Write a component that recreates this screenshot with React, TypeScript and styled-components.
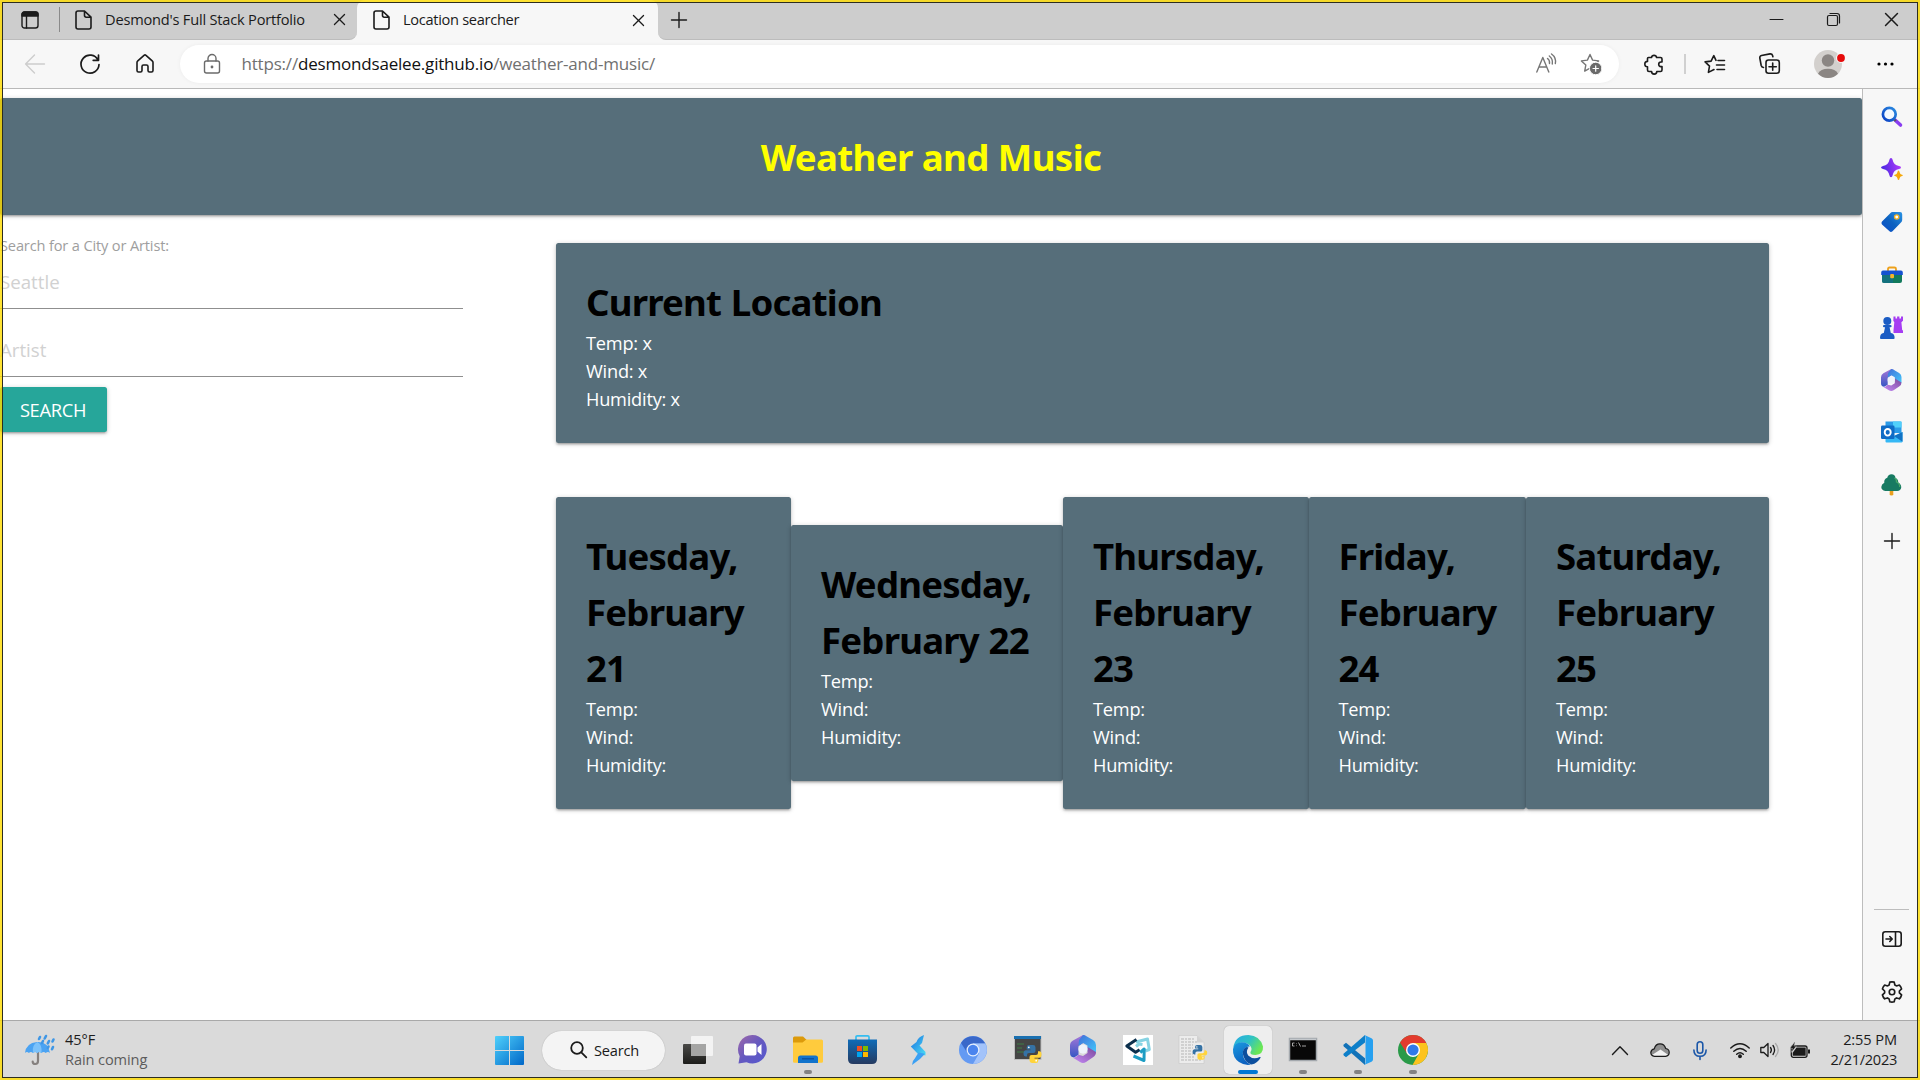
import React from "react";
import styled, { createGlobalStyle, css } from "styled-components";

const slate = "#566e7a";
const ui = `"Open Sans", "Noto Sans", sans-serif`;

const GlobalStyle = createGlobalStyle`
  * { box-sizing: border-box; }
  body { margin: 0; overflow: hidden; background: #fff; font-family: ${ui}; }
  h1, h2, p { margin: 0; }
`;

const Screen = styled.div`
  position: relative;
  display: flex;
  flex-direction: column;
  width: 1920px;
  height: 1080px;
  overflow: hidden;
  background: #fff;
`;

const CaptureFrame = styled.div`
  position: absolute;
  inset: 0;
  border: 2px solid rgba(255, 220, 0, 0.8);
  pointer-events: none;
  &::after {
    content: "";
    position: absolute;
    inset: 0;
    border: 1px solid #2d2d20;
  }
`;

const Glyph = styled.svg<{ $w?: number; $h?: number }>`
  display: block;
  flex: none;
  width: ${(p) => p.$w ?? 22}px;
  height: ${(p) => p.$h ?? p.$w ?? 22}px;
  overflow: visible;
`;

const lineArt = {
  fill: "none",
  stroke: "#1b1b1b",
  strokeWidth: 1.4,
  strokeLinecap: "round",
  strokeLinejoin: "round",
} as const;

/* ---------- Title bar ---------- */

const TitleBar = styled.header`
  display: flex;
  height: 40px;
  background: #f7f7f7;
`;

const InactiveTabs = styled.div`
  display: flex;
  align-items: center;
  width: 357px;
  background: #cdcdcd;
  border-bottom: 1px solid #bcbcbc;
  border-radius: 0 0 8px 0;
`;

const TabActions = styled.div`
  display: flex;
  align-items: center;
  justify-content: flex-end;
  gap: 20px;
  width: 60px;
`;

const TabRule = styled.span`
  width: 1px;
  height: 25px;
  background: #8a8a8a;
`;

const TabBody = styled.div<{ $tight?: number }>`
  display: flex;
  align-items: center;
  flex: 1;
  padding: 0 18px 0 15px;
  font-size: 14.6px;
  line-height: 20px;
  letter-spacing: ${(p) => p.$tight ?? -0.2}px;
  color: #1a1a1a;
`;

const TabTitle = styled.span`
  flex: 1;
  padding: 0 0 2px 13px;
  white-space: nowrap;
`;

const ActiveTabWell = styled.div`
  display: flex;
  width: 301px;
  background: linear-gradient(#cdcdcd 50%, #f7f7f7 50%);
`;

const ActiveTab = styled.div`
  display: flex;
  flex: 1;
  padding: 0 2px 0 1px;
  background: #f7f7f7;
  border-radius: 8px 8px 0 0;
`;

const TitleRest = styled.div`
  display: flex;
  align-items: center;
  flex: 1;
  background: #cdcdcd;
  border-bottom: 1px solid #bcbcbc;
  border-radius: 0 0 0 8px;
`;

const Slot = styled.div<{ $w: number; $h?: number }>`
  display: flex;
  align-items: center;
  justify-content: center;
  flex: none;
  width: ${(p) => p.$w}px;
  ${(p) => p.$h && css`height: ${p.$h}px;`}
`;

const WindowButtons = styled.div`
  display: flex;
  margin-left: auto;
`;

/* ---------- Toolbar ---------- */

const Toolbar = styled.nav`
  display: flex;
  align-items: center;
  height: 49px;
  padding: 0 0 1px 7px;
  background: #f7f7f7;
  border-bottom: 1px solid #b9b9b9;
`;

const AddressPill = styled.div`
  display: flex;
  align-items: center;
  width: 1439px;
  height: 38px;
  margin: 0 7px 0 8px;
  padding: 0 6px 0 21px;
  border-radius: 19px;
  background: #fff;
  box-shadow: 0 0 4px rgba(0, 0, 0, 0.05);
`;

const Address = styled.span`
  flex: 1;
  padding-left: 18.5px;
  font-size: 17px;
  letter-spacing: -0.19px;
  color: #707070;
  b { font-weight: 400; color: #111; }
`;

const ToolRule = styled.span`
  width: 2px;
  height: 20px;
  background: #d0d0d0;
`;

/* ---------- Page and sidebar ---------- */

const Viewport = styled.div`
  display: flex;
  height: 931px;
`;

const Page = styled.main`
  width: 1862px;
  padding-top: 9px;
  background: #fff;
`;

const raised = css`
  background: ${slate};
  border-radius: 2.5px;
  box-shadow: 0 2px 2px 0 rgba(0, 0, 0, 0.14), 0 3px 1px -2px rgba(0, 0, 0, 0.12),
    0 1px 5px 0 rgba(0, 0, 0, 0.2);
`;

const Banner = styled.section`
  ${raised}
  display: flex;
  align-items: center;
  justify-content: center;
  height: 117px;
  padding-top: 1px;
`;

const BannerTitle = styled.h1`
  font: 700 36.6px/56px "Noto Sans", ${ui};
  letter-spacing: -0.58px;
  color: #ff0;
`;

const Columns = styled.div`
  display: grid;
  grid-template-columns: 463px 1213px;
  column-gap: 93px;
`;

const SearchForm = styled.form`
  display: flex;
  flex-direction: column;
  align-items: flex-start;
  padding-top: 21px;
`;

const FieldLabel = styled.label`
  font-size: 14.6px;
  line-height: 19px;
  letter-spacing: -0.15px;
  color: #9e9e9e;
`;

const Field = styled.input`
  width: 100%;
  height: 54px;
  padding: 0 0 1px;
  border: 0;
  border-bottom: 1px solid #8f8f8f;
  background: transparent;
  outline: 0;
  font: 18.7px ${ui};
  &::placeholder { color: #d1d1d1; opacity: 1; }
  & + & { margin-top: 14px; }
`;

const SearchButton = styled.button`
  ${raised}
  width: 107px;
  height: 45px;
  margin-top: 10px;
  padding: 0 1px 0 0;
  border: 0;
  background: #26a69a;
  color: #fff;
  font: 18.3px ${ui};
  letter-spacing: -0.3px;
`;

const Results = styled.section`
  display: flex;
  flex-direction: column;
  gap: 54px;
  padding-top: 28px;
`;

const Card = styled.article<{ $w?: number }>`
  ${raised}
  width: ${(p) => (p.$w ? `${p.$w}px` : "auto")};
  padding: 30px 30px 29.400px;
`;

const CardTitle = styled.h2`
  padding-top: 1px;
  margin-bottom: -1px;
  font: 700 36.6px/56px "Noto Sans", ${ui};
  letter-spacing: -0.8px;
  word-spacing: 1px;
  color: #000;
  white-space: pre-line;
`;

const Reading = styled.p`
  font-size: 18.2px;
  line-height: 28.2px;
  letter-spacing: -0.22px;
  color: #fff;
`;

const Forecast = styled.div`
  display: flex;
  align-items: center;
`;

const Sidebar = styled.aside`
  display: flex;
  flex-direction: column;
  align-items: center;
  flex: 1;
  padding: 1.500px 0 2px 0;
  border-left: 1px solid #bdbdbd;
  background: #f7f7f7;
`;

const SidebarFoot = styled.div`
  margin-top: auto;
  padding-top: 3px;
  border-top: 1px solid #bdbdbd;
`;

/* ---------- Taskbar ---------- */

const Taskbar = styled.footer`
  display: flex;
  align-items: center;
  height: 60px;
  padding-right: 23px;
  padding-bottom: 1px;
  border-top: 1px solid #a9a9a9;
  background: #dadada;
`;

const Weather = styled.div`
  display: flex;
  align-items: center;
  gap: 10px;
  width: 482.5px;
  padding-left: 25px;
`;

const TwoLines = styled.div<{ $right?: boolean }>`
  width: ${(p) => (p.$right ? "82px" : "auto")};
  padding-bottom: 3px;
  font-size: 14.6px;
  line-height: 20px;
  letter-spacing: -0.1px;
  text-align: ${(p) => (p.$right ? "right" : "left")};
  color: #1c1c1c;
`;

const Muted = styled.div`
  color: #5c5c5c;
`;

const DateLine = styled.div`
  letter-spacing: -0.3px;
`;

const SearchPill = styled.div`
  display: flex;
  align-items: center;
  gap: 7px;
  width: 123px;
  height: 39px;
  margin: 0 5px 0 5.5px;
  padding: 0 0 1px 28px;
  border-radius: 20px;
  background: #f4f4f4;
  box-shadow: 0 0 1px rgba(0, 0, 0, 0.3);
  font-size: 14.6px;
  letter-spacing: -0.2px;
  color: #1a1a1a;
`;

const AppButton = styled.div<{ $state?: "running" | "active" }>`
  position: relative;
  display: flex;
  align-items: center;
  justify-content: center;
  width: 48px;
  height: 48px;
  margin: 0 3.5px;
  padding-bottom: 1px;
  border-radius: 5px;
  ${(p) =>
    p.$state === "active" &&
    css`background: #eeeeee; box-shadow: 0 0 1px rgba(0, 0, 0, 0.3);`}
  ${(p) =>
    p.$state &&
    css`
      &::after {
        content: "";
        position: absolute;
        bottom: 0;
        left: 50%;
        width: ${p.$state === "active" ? 20 : 8}px;
        height: 4px;
        border-radius: 2px;
        transform: translateX(-50%);
        background: ${p.$state === "active" ? "#0078d4" : "#838383"};
      }
    `}
`;

const Tray = styled.div`
  display: flex;
  align-items: center;
  margin-left: auto;
`;

const TrayStatus = styled.div`
  display: flex;
  padding-left: 5px;
`;

/* ---------- Line icons ---------- */

const PageIcon = () => (
  <Glyph $w={17} $h={20} viewBox="0 0 17 20" {...lineArt} strokeWidth={1.6}>
    <path d="M3 1h6.5L16 7.200V17a2 2 0 0 1-2 2H3a2 2 0 0 1-2-2V3a2 2 0 0 1 2-2zM9.500 1v4.600a1.600 1.600 0 0 0 1.600 1.600H16" />
  </Glyph>
);
const CloseIcon = ({ size = 11 }: { size?: number }) => (
  <Glyph $w={size} viewBox="0 0 12 12" {...lineArt}>
    <path d="M.5.5l11 11M11.500.5l-11 11" />
  </Glyph>
);
const PlusIcon = () => (
  <Glyph $w={16} viewBox="0 0 16 16" {...lineArt}>
    <path d="M8 .5v15M.5 8h15" />
  </Glyph>
);

const star = "M10 1.500l2.600 5.600 6 .8-4.400 4.200 1.100 6L10 15.200l-5.300 2.900 1.100-6L1.400 7.900l6-.8z";

/* ---------- Brand pictures ---------- */

const OfficeIcon = ({ size = 24 }: { size?: number }) => (
  <Glyph $w={size} $h={size * 1.08} viewBox="0 0 26 28">
    <defs>
      <linearGradient id="ofA" x1="0" y1="0" x2="1" y2="1"><stop stopColor="#3f6fd8" /><stop offset="1" stopColor="#45c7fb" /></linearGradient>
      <linearGradient id="ofB" x1="0" y1="0" x2="0" y2="1"><stop stopColor="#a877d8" /><stop offset="1" stopColor="#3556c4" /></linearGradient>
      <linearGradient id="ofC" x1="0" y1="1" x2="1" y2="0"><stop stopColor="#c68af6" /><stop offset="1" stopColor="#7a4a9c" /></linearGradient>
    </defs>
    <path d="M13 0L3 5.500Q0 7.200 0 10.500V18q0 4 4 4.500l4.500-2.700V11L17 5.500 16 1Q14.500 0 13 0z" fill="url(#ofB)" />
    <path d="M13 0q1.500 0 3 1l7 4q3 1.800 3 5v7.500L17.500 16v-5.500L13 8l-4.500 3L9 5z" fill="url(#ofA)" />
    <path d="M26 17q0 3.500-3 5.200l-7 4.800q-3 1.700-6 0l-7-4.300q2.500.5 5.500-2.900l4.500 1.200 4.500-3V12z" fill="url(#ofC)" />
    <circle cx="13" cy="14" r="4.600" fill="#eef2fa" />
  </Glyph>
);

const PythonMark = () => (
  <g>
    <path d="M5.500 0h4Q12 0 12 2.400V6Q12 8 10 8H5.500Q3.500 8 3.500 10v1.500H2.300Q0 11.500 0 8.500T2.400 5.300H7V4.400H3.200V2.200Q3.200 0 5.500 0z" fill="#3572a5" />
    <path d="M12.500 18h-4Q6 18 6 15.600V12Q6 10 8 10h4.500q2 0 2-2V6.300h1.200Q18 6.300 18 9.400t-2.400 3.300H11v.9h3.800v2.200q0 2.200-2.300 2.200z" fill="#ffd43b" />
    <circle cx="5.300" cy="2.300" r=".9" fill="#fff" />
    <circle cx="12.700" cy="15.700" r=".9" fill="#fff" />
  </g>
);

const UmbrellaIcon = () => (
  <Glyph $w={30} viewBox="0 0 30 30">
    <path d="M13 16v10q0 3-2.700 3T7.700 26.500" fill="none" stroke="#85807e" strokeWidth="2.200" strokeLinecap="round" />
    <path d="M0 18Q1 8 12 7t13 11q-2-2-4.300 0-2-2-4.300 0-2.200-2-4.300 0-2-2-4.200 0-2-2-4 0-2-2-3.900 0z" fill="#4ba3f2" />
    <path d="M12.500 7q-6 3-4.500 11 2.200-2 4.200 0 2-2 4.300 0 1-8-4-11z" fill="#7cc2fa" />
    <path d="M15 2l-1 2M21 1l-1.300 2.500M18 6l-1 2M24 6l-1.200 2.400M28.500 4.500l-1 2M28 12l-1 2.200M23.500 11.500l-.6 1.300" stroke="#3f97e6" strokeWidth="2.600" strokeLinecap="round" />
  </Glyph>
);

const WindowsIcon = () => (
  <Glyph $w={29} viewBox="0 0 29 29">
    <defs><linearGradient id="win" x1="0" y1="0" x2="1" y2="1"><stop stopColor="#4fd0fb" /><stop offset="1" stopColor="#0067c8" /></linearGradient></defs>
    <path d="M1 0h13v14H0V1q0-1 1-1zM15 0h13q1 0 1 1v13H15zM0 15h14v14H1q-1 0-1-1zM15 15h14v13q0 1-1 1H15z" fill="url(#win)" />
  </Glyph>
);

const TaskViewIcon = () => (
  <Glyph $w={30} $h={28} viewBox="0 0 30 28">
    <defs><linearGradient id="tv" x1="0" y1="0" x2="0" y2="1"><stop stopColor="#4a4a48" /><stop offset="1" stopColor="#1c1c1a" /></linearGradient></defs>
    <rect y="8" width="23" height="20" rx="1" fill="url(#tv)" />
    <rect x="8" width="22" height="20" rx="1" fill="#f3f3f3" />
    <rect x="8" y="8" width="15" height="12" fill="#a5a5a4" />
  </Glyph>
);

const ChatIcon = () => (
  <Glyph $w={29} viewBox="0 0 29 29">
    <defs><linearGradient id="ch" x1="0" y1="0" x2="1" y2="1"><stop stopColor="#a068a8" /><stop offset=".5" stopColor="#6459c0" /><stop offset="1" stopColor="#5558d0" /></linearGradient></defs>
    <path d="M14.500 0a14.300 14.300 0 1 1-6 27.300L.5 28.500l1.200-7.300A14.300 14.300 0 0 1 14.500 0z" fill="url(#ch)" />
    <rect x="6" y="8.500" width="12.500" height="12" rx="2" fill="#fff" />
    <path d="M19.500 12.500L23.500 9v11l-4-3.500z" fill="#fff" />
  </Glyph>
);

const FolderIcon = () => (
  <Glyph $w={30} $h={27} viewBox="0 0 30 27">
    <path d="M0 8V2Q0 .5 1.500.5H10l3.500 3.200L10 8z" fill="#dc9a0b" />
    <path d="M0 6.500h9.500l3.800-3H28.500q1.500 0 1.500 1.500v20.500q0 1.300-1.300 1.300H1.300Q0 26.800 0 25.500z" fill="#ffcb3d" />
    <path d="M5 27v-5q0-2.500 2.500-2.500h15q2.500 0 2.500 2.500v5z" fill="#1173cc" />
    <path d="M9 22.800h12" stroke="#0a4f9c" strokeWidth="1.300" />
  </Glyph>
);

const StoreIcon = () => (
  <Glyph $w={29} viewBox="0 0 29 29">
    <defs><linearGradient id="st" x1="0" y1="0" x2="0" y2="1"><stop stopColor="#0f6cb8" /><stop offset="1" stopColor="#253a60" /></linearGradient></defs>
    <path d="M8 6V2Q8 .8 9.200.8h10.600Q21 .8 21 2v4" fill="none" stroke="#35bdf0" strokeWidth="1.700" />
    <path d="M0 4.500h29V24q0 5-5 5H5q-5 0-5-5z" fill="url(#st)" />
    <path d="M9 11h5v5H9z" fill="#f25022" /><path d="M15 11h5v5h-5z" fill="#7fba00" />
    <path d="M9 17h5v5H9z" fill="#00a4ef" /><path d="M15 17h5v5h-5z" fill="#ffb900" />
  </Glyph>
);

const BoltIcon = () => (
  <Glyph $w={16} $h={30} viewBox="0 0 16 30">
    <defs><linearGradient id="bo" x1="0" y1="0" x2="1" y2="1"><stop stopColor="#1b6fe0" /><stop offset="1" stopColor="#4be0f5" /></linearGradient></defs>
    <path d="M14 0Q8 2 6.500 7L.8 11.500 8 19l7.500 1.500V17L9.500 10.500 12 8z" fill="url(#bo)" />
    <path d="M8.500 17.500l6.500 1.300-5 5.200L2 30q0-4 2.800-6.500z" fill="#3ba0f3" />
  </Glyph>
);

const ChromiumIcon = () => (
  <Glyph $w={28} viewBox="0 0 28 28">
    <circle cx="14" cy="14" r="14" fill="#649af3" />
    <path d="M14 14V7.500h12.300A14 14 0 0 0 2 7l6.500 10z" fill="#3a68c9" />
    <path d="M26.300 7.500H14l6 10L14 28A14 14 0 0 0 26.300 7.500z" fill="#a3c3fa" />
    <circle cx="14" cy="14" r="6.500" fill="#e6effd" />
    <circle cx="14" cy="14" r="5.200" fill="#4a84ee" />
  </Glyph>
);

const IdleIcon = () => (
  <Glyph $w={28} viewBox="0 0 28 28">
    <rect x=".5" y=".5" width="26.500" height="23" fill="#454545" stroke="#bdbdbd" />
    <rect width="27" height="3" fill="#1a70b0" />
    <path d="M3 8h7M3 12h5M3 16h7" stroke="#3f7f46" />
    <g transform="translate(9.500 9)"><PythonMark /></g>
  </Glyph>
);

const KnotIcon = () => (
  <Glyph $w={30} viewBox="0 0 30 30">
    <rect width="30" height="30" fill="#fff" />
    <g fill="none" strokeWidth="3" strokeLinejoin="round">
      <path d="M13 7l11.500-3 1.800 10.500-4 1.500" stroke="#86d3e3" />
      <path d="M19.500 9.500L16 9l-3 2.500" stroke="#86d3e3" />
      <path d="M13.500 4.500L3.800 11l8.800 6.300 4-2.500" stroke="#0b2f4c" />
      <path d="M10.500 21l10.500 4.500.2-11.500-4 3.500" stroke="#1c9dc4" />
    </g>
  </Glyph>
);

const PyFileIcon = () => (
  <Glyph $w={28} $h={29} viewBox="0 0 28 29">
    <path d="M0 .5h18l7 7V28.500H0z" fill="#ececec" stroke="#c8c8c8" strokeWidth=".6" />
    <path d="M2 4h14M2 7h16M2 10h12M2 13h12M2 16h11M2 19h12M2 22h13M2 25h20" stroke="#b5b5b5" strokeDasharray="3 1 2 1" />
    <path d="M18 .5l7 7h-7z" fill="#d2d2d2" />
    <g transform="translate(13.500 10) scale(.82)"><PythonMark /></g>
  </Glyph>
);

const EdgeIcon = () => (
  <Glyph $w={30} viewBox="0 0 30 30">
    <defs>
      <linearGradient id="edA" x1="0" y1="0" x2="1" y2=".5"><stop stopColor="#27a9e6" /><stop offset=".55" stopColor="#2fc2c4" /><stop offset="1" stopColor="#6be755" /></linearGradient>
      <linearGradient id="edB" x1="0" y1="0" x2=".4" y2="1"><stop stopColor="#1a9ae0" /><stop offset="1" stopColor="#0d62c0" /></linearGradient>
    </defs>
    <path d="M.2 13Q2 0 15.500 0 27 .5 30 11.500 30.500 19.500 22.500 20q-6 0-5-3 2.500-3.500-1-7Q8 4 .2 13z" fill="url(#edA)" />
    <path d="M0 14Q1.500 7.500 9 7.200q6 .2 8 4.300Q10.500 11 9.800 18 10 26 18 29.600 12 31 6 27-.5 22.500 0 14z" fill="url(#edB)" />
    <path d="M13 12.200Q9.600 14 9.800 18.500 11 27 18.500 29.600 24.500 28.500 27.700 22.600q0-1-1-.6Q20 25 15.200 20.500 12.500 17 15.500 12.600 14.500 11.800 13 12.200z" fill="#0d4f9e" />
  </Glyph>
);

const TerminalIcon = () => (
  <Glyph $w={28} $h={23} viewBox="0 0 28 23">
    <rect x=".5" y=".5" width="27" height="22" fill="#080808" stroke="#a3a8ad" strokeWidth="1.500" />
    <path d="M1 1.500h26" stroke="#c4c8cc" strokeWidth="1.500" />
    <path d="M5.500 5H3.500v3h2M7.500 5.500v.6M7.500 7.500v.6M9.500 4.500l2 4M13 8h4" stroke="#ccc" strokeWidth=".8" fill="none" />
  </Glyph>
);

const CodeIcon = () => (
  <Glyph $w={30} viewBox="0 0 30 30">
    <path d="M.8 9.500L3 7.800l19 15.400V30L.8 11.500q-1-1 0-2z" fill="#1272b8" />
    <path d="M.8 20.500L3 22.200 22 7.500V0L.8 18.500q-1 1 0 2z" fill="#0d7fc9" />
    <path d="M21 30l7.500-3.300q1.500-.8 1.500-2.300V5.600q0-1.500-1.500-2.300L21.500 0Q22.500.8 22.500 2.500v25q0 1.700-1.500 2.500z" fill="#26a0f0" />
  </Glyph>
);

const ChromeIcon = () => (
  <Glyph $w={30} viewBox="0 0 30 30">
    <circle cx="15" cy="15" r="15" fill="#2a9a48" />
    <path d="M15 8h13.300A15 15 0 0 0 2 7.500L9 18.500z" fill="#e33b2e" />
    <path d="M15 8h13.300A15 15 0 0 1 14.500 30L21 18.500z" fill="#fcc31e" />
    <circle cx="15" cy="15" r="7" fill="#fff" />
    <circle cx="15" cy="15" r="5.600" fill="#3079ea" />
  </Glyph>
);

/* ---------- Sidebar pictures ---------- */

const SideSearch = () => (
  <Glyph viewBox="0 0 22 22">
    <defs><linearGradient id="ss" x1="0" y1="1" x2="1" y2="0"><stop stopColor="#0a3fc4" /><stop offset="1" stopColor="#2b8be0" /></linearGradient></defs>
    <path d="M14 14l5.500 5" stroke="#8a3df0" strokeWidth="3.600" strokeLinecap="round" />
    <path d="M12.800 13l2 2" stroke="#5a5560" strokeWidth="2.400" />
    <circle cx="8.300" cy="8.300" r="6.400" fill="#f4f9ff" stroke="url(#ss)" strokeWidth="2.700" />
  </Glyph>
);
const SideSparkle = () => (
  <Glyph viewBox="0 0 22 22">
    <defs><linearGradient id="sp" x1="0" y1=".6" x2="1" y2=".4"><stop stopColor="#4527e0" /><stop offset="1" stopColor="#b23dfb" /></linearGradient></defs>
    <path d="M10 0q1.300 0 1.600 1.700.9 5.300 6.400 6.400 2 .4 2 1.400t-2 1.500Q12.500 12 11.600 17.300 11.300 19.300 10 19.300T8.400 17.300Q7.500 12 2 11 0 10.600 0 9.600t2-1.500Q7.500 7 8.400 1.700 8.700 0 10 0z" fill="url(#sp)" />
    <path d="M17.500 12.500q.8 0 1 1.500.5 2.500 2.500 2.700 1 .2 1 .6t-1 .6q-2 .3-2.500 2.600-.2 1.500-1 1.500t-1-1.500q-.5-2.300-2.500-2.600-1-.2-1-.6t1-.6q2-.2 2.500-2.700.2-1.500 1-1.500z" fill="#f5a80a" />
  </Glyph>
);
const SideTag = () => (
  <Glyph viewBox="0 0 22 22">
    <defs><linearGradient id="tg" x1="0" y1="1" x2="1" y2="0"><stop stopColor="#0a4bc8" /><stop offset=".5" stopColor="#0d62c0" /><stop offset="1" stopColor="#2a93e4" /></linearGradient></defs>
    <path d="M11.500 1H19q2.200 0 2.200 2.200V9q0 1.300-1 2.300l-8.700 9q-1.600 1.500-3 0L1 13.500q-1.200-1.400 0-3L9.500 2q.8-1 2-1z" fill="url(#tg)" />
    <circle cx="15.700" cy="6" r="2.100" fill="#fff" stroke="#f6b321" strokeWidth="1.400" />
  </Glyph>
);
const SideToolbox = () => (
  <Glyph $w={22} $h={18} viewBox="0 0 22 18">
    <path d="M7 5V3q0-1.500 1.500-1.500h5Q15 1.500 15 3v2" fill="none" stroke="#eda11c" strokeWidth="1.800" />
    <path d="M1 8h20v7q0 2-2 2H3q-2 0-2-2z" fill="#127a5c" />
    <path d="M1 8h11v9H3q-2 0-2-2z" fill="#156f87" opacity=".8" />
    <path d="M2 4.500h18q1.800 0 1.800 2V9H.2V6.500q0-2 1.800-2z" fill="#1551d0" />
    <rect x="9.200" y="8" width="3.800" height="4.200" rx="1" fill="#f5b32c" />
  </Glyph>
);
const SideGames = () => (
  <Glyph $w={23} viewBox="0 0 23 23">
    <path d="M13.500.5h2v2h1.600v-2h2.300v2H21v-2h2v4.200l-1.600 1.600.8 8H23V17h-9.500v-2.700l.8-8-1-1.600z" fill="#a63df2" />
    <g fill="#1b5cc4"><circle cx="7.300" cy="5" r="4" /><rect x="3" y="9" width="8.600" height="2.300" rx="1.100" /><path d="M5.300 10h4l1.700 8H3.600z" /><path d="M0 22q0-4.500 3.600-5H11q3.600.5 3.600 5 0 1-1 1H1q-1 0-1-1z" /></g>
  </Glyph>
);
const SideOutlook = () => (
  <Glyph viewBox="0 0 22 22">
    <path d="M4.500.5h15q1 0 1 1V12h-16z" fill="#2b9be8" /><path d="M12 .5h8.500v6H12z" fill="#50d0fb" />
    <path d="M4.500 11L13 15l8.500-4v9.500q0 1-1 1h-15q-1 0-1-1z" fill="#35b8f5" />
    <path d="M21.500 11v9.800L13 15z" fill="#1273c4" />
    <rect y="4.500" width="13.500" height="13.500" rx="1.200" fill="#0f6cc6" />
    <ellipse cx="6.700" cy="11.300" rx="3" ry="3.300" fill="none" stroke="#fff" strokeWidth="1.900" />
  </Glyph>
);
const SideTree = () => (
  <Glyph viewBox="0 0 22 22">
    <path d="M8.700 15h3.600v5.200q0 1.300-1.800 1.300t-1.800-1.300z" fill="#e9a01f" />
    <path d="M10.500.3q3.600 0 4 3.700 3 1 2.700 4.500 3.300 1.700 3 5.200-.5 3-4 3.200H4.300q-4-.5-4-3.800.2-2.900 3-4.300-.6-3.600 3-5Q7 .5 10.500.3z" fill="#177a62" />
    <path d="M13.500 4q2.500 1 2 4 3.500 1.700 3.200 5" stroke="#4aa869" strokeWidth="1.300" fill="none" />
  </Glyph>
);

const appIcons: { icon: React.ReactNode; state?: "running" | "active" }[] = [
  { icon: <TaskViewIcon /> },
  { icon: <ChatIcon /> },
  { icon: <FolderIcon />, state: "running" },
  { icon: <StoreIcon /> },
  { icon: <BoltIcon /> },
  { icon: <ChromiumIcon /> },
  { icon: <IdleIcon /> },
  { icon: <OfficeIcon size={26} /> },
  { icon: <KnotIcon /> },
  { icon: <PyFileIcon /> },
  { icon: <EdgeIcon />, state: "active" },
  { icon: <TerminalIcon />, state: "running" },
  { icon: <CodeIcon />, state: "running" },
  { icon: <ChromeIcon />, state: "running" },
];

const sideIcons = [
  <SideSearch />, <SideSparkle />, <SideTag />, <SideToolbox />,
  <SideGames />, <OfficeIcon size={20.5} />, <SideOutlook />, <SideTree />,
];

const days = [
  { title: "Tuesday,\nFebruary\n21", width: 235 },
  { title: "Wednesday,\nFebruary 22", width: 272 },
  { title: "Thursday,\nFebruary\n23", width: 245.5 },
  { title: "Friday,\nFebruary\n24", width: 217.5 },
  { title: "Saturday,\nFebruary\n25", width: 243 },
];

const BrowserTabs = () => (
  <TitleBar>
    <InactiveTabs>
      <TabActions>
        <Glyph $w={18} viewBox="0 0 18 18" {...lineArt}>
          <rect x="1" y="1" width="16" height="16" rx="2.500" />
          <path d="M1 5V3.500Q1 1 3.500 1h11Q17 1 17 3.500V5z" fill="#1b1b1b" />
          <path d="M5.500 5v12" />
        </Glyph>
        <TabRule />
      </TabActions>
      <TabBody>
        <PageIcon />
        <TabTitle>Desmond's Full Stack Portfolio</TabTitle>
        <Slot $w={0}><CloseIcon /></Slot>
      </TabBody>
    </InactiveTabs>
    <ActiveTabWell>
      <ActiveTab>
        <TabBody $tight={-0.3}>
          <PageIcon />
          <TabTitle>Location searcher</TabTitle>
          <Slot $w={0}><CloseIcon /></Slot>
        </TabBody>
      </ActiveTab>
    </ActiveTabWell>
    <TitleRest>
      <Slot $w={42}><PlusIcon /></Slot>
      <WindowButtons>
        <Slot $w={57.5}>
          <Glyph $w={13} viewBox="0 0 13 13" {...lineArt} strokeWidth={1}><path d="M0 6.500h13" /></Glyph>
        </Slot>
        <Slot $w={57.5}>
          <Glyph $w={13} viewBox="0 0 13 13" {...lineArt} strokeWidth={1.2}>
            <rect x=".5" y="2.500" width="10" height="10" rx="1.500" />
            <path d="M3 .5h7Q12.500.5 12.500 3v7" />
          </Glyph>
        </Slot>
        <Slot $w={57.5}><CloseIcon size={13} /></Slot>
      </WindowButtons>
    </TitleRest>
  </TitleBar>
);

const BrowserToolbar = () => (
  <Toolbar>
    <Slot $w={55}>
      <Glyph $w={20} viewBox="0 0 20 20" {...lineArt} stroke="#cdcdcd"><path d="M19.500 10H.8M9.500 1L.6 10l8.900 9" /></Glyph>
    </Slot>
    <Slot $w={55}>
      <Glyph $w={20} viewBox="0 0 20 20" {...lineArt} strokeWidth={1.7}><path d="M18 6A9 9 0 1 0 19 10.500M18.500 1v5.300h-5.300" /></Glyph>
    </Slot>
    <Slot $w={55}>
      <Glyph $w={18} $h={19} viewBox="0 0 18 19" {...lineArt} strokeWidth={1.600}>
        <path d="M1 8.500q0-1 .8-1.700L8 1.300q1-.8 2 0l6.200 5.500q.8.7.8 1.700V16.500q0 1.500-1.500 1.500h-2q-1.500 0-1.500-1.500v-4q0-1.500-1.500-1.500h-3Q6 11 6 12.500v4Q6 18 4.500 18h-2Q1 18 1 16.500z" />
      </Glyph>
    </Slot>
    <AddressPill>
      <Glyph $w={22} viewBox="0 0 22 22" {...lineArt} stroke="#6b6b6b">
        <rect x="3.500" y="8" width="15" height="12" rx="2" /><path d="M7 8V5.500a4 4 0 0 1 8 0V8" /><circle cx="11" cy="14" r=".7" fill="#6b6b6b" />
      </Glyph>
      <Address>https://<b>desmondsaelee.github.io</b>/weather-and-music/</Address>
      <Slot $w={45}>
        <Glyph $w={20} viewBox="0 0 20 20" {...lineArt} stroke="#767676">
          <path d="M.8 18L6.800 3.500 12.800 18M3 13h7.600M11.500 4.500q2.500 1.800 2 5M13.300 2q3.800 2.700 3 8M15.500 0q5 3.500 3.800 9.500" />
        </Glyph>
      </Slot>
      <Slot $w={45}>
        <Glyph $w={21} viewBox="0 0 21 21" {...lineArt} stroke="#767676">
          <path d={star} /><circle cx="15.700" cy="15.500" r="6.300" fill="#6a6a6a" stroke="#fff" strokeWidth="1" /><path d="M15.700 12.800v5.400M13 15.500h5.400" stroke="#fff" strokeWidth="1.200" />
        </Glyph>
      </Slot>
    </AddressPill>
    <Slot $w={55}>
      <Glyph $w={20} viewBox="0 0 20 20" {...lineArt} strokeWidth={1.600}>
        <path d="M4.500 3.500h3a2.600 2.600 0 0 1 5.100 0H16.500q1.500 0 1.500 1.500v3h-1a2.300 2.300 0 0 0 0 4.600h1V16q0 1.500-1.500 1.500H12.800a2.600 2.600 0 0 1-5.200 0H5Q3.500 17.500 3.500 16v-3.200a2.700 2.700 0 0 1 0-5.400V4.500q0-1 1-1z" />
      </Glyph>
    </Slot>
    <Slot $w={7}><ToolRule /></Slot>
    <Slot $w={53}>
      <Glyph $w={21} $h={20} viewBox="0 0 21 20" {...lineArt} strokeWidth={1.600}>
        <path d="M12 6.300l-2.200-4.700-2.700 5.500-6 .8 4.400 4.200-1.100 6.300L10 15.500M14 6.500h6.500M12.500 11h8M13 15.500h7.500" />
      </Glyph>
    </Slot>
    <Slot $w={57}>
      <Glyph $w={21} viewBox="0 0 21 21" {...lineArt} strokeWidth={1.600}>
        <path d="M4.500 14.500Q2.600 14.300 2.200 12.500L.8 5Q.6 3 2.500 2.500L11 .9q2-.2 2.600 1.700l.3 1.200" />
        <rect x="7" y="7" width="13.300" height="13.300" rx="2.500" /><path d="M13.700 10v7.300M10 13.700h7.300" />
      </Glyph>
    </Slot>
    <Slot $w={59}>
      <Glyph $w={28} viewBox="0 0 28 28">
        <circle cx="14" cy="14" r="14" fill="#d3d0cd" /><circle cx="14" cy="10.500" r="6.200" fill="#8b8683" />
        <path d="M4 23.800q2.500-5 10-5t10 5A14 14 0 0 1 4 23.800z" fill="#8b8683" />
        <circle cx="27" cy="8" r="5" fill="#f7f7f7" /><circle cx="27" cy="8" r="3.900" fill="#e60b0b" />
      </Glyph>
    </Slot>
    <Slot $w={56}>
      <Glyph $w={17} $h={4} viewBox="0 0 17 4"><circle cx="2" cy="2" r="1.600" /><circle cx="8.500" cy="2" r="1.600" /><circle cx="15" cy="2" r="1.600" /></Glyph>
    </Slot>
  </Toolbar>
);

const WeatherPage = () => (
  <Page>
    <Banner><BannerTitle>Weather and Music</BannerTitle></Banner>
    <Columns>
      <SearchForm>
        <FieldLabel>Search for a City or Artist:</FieldLabel>
        <Field placeholder="Seattle" />
        <Field placeholder="Artist" />
        <SearchButton type="button">SEARCH</SearchButton>
      </SearchForm>
      <Results>
        <Card>
          <CardTitle>Current Location</CardTitle>
          <Reading>Temp: x</Reading>
          <Reading>Wind: x</Reading>
          <Reading>Humidity: x</Reading>
        </Card>
        <Forecast>
          {days.map((d) => (
            <Card key={d.title} $w={d.width}>
              <CardTitle>{d.title}</CardTitle>
              <Reading>Temp:</Reading>
              <Reading>Wind:</Reading>
              <Reading>Humidity:</Reading>
            </Card>
          ))}
        </Forecast>
      </Results>
    </Columns>
  </Page>
);

const gear =
  "M9 1.200q2-.5 4 0l.6 2.600q.8.4 1.500.9l2.600-.8q1.500 1.500 2 3.500l-2 1.900v1.700l2 1.900q-.5 2-2 3.500l-2.600-.8q-.7.600-1.500.9L13 19.100q-2 .5-4 0l-.6-2.600q-.8-.3-1.500-.9l-2.600.8q-1.500-1.500-2-3.500l2-1.900V9.300l-2-1.900q.5-2 2-3.500l2.600.8q.7-.5 1.500-.9z";

const EdgeSidebar = () => (
  <Sidebar>
    {sideIcons.map((icon, i) => (
      <Slot key={i} $w={54} $h={52.6}>{icon}</Slot>
    ))}
    <Slot $w={54} $h={59}><PlusIcon /></Slot>
    <SidebarFoot>
      <Slot $w={35} $h={52.5}>
        <Glyph $w={20} $h={16} viewBox="0 0 20 16" {...lineArt} strokeWidth={1.600}>
          <rect x=".8" y=".8" width="18.400" height="14.400" rx="2.500" /><path d="M13.500 1v14M4 8h6M7.800 5.500L10.200 8l-2.400 2.500" />
        </Glyph>
      </Slot>
      <Slot $w={35} $h={52.5}>
        <Glyph viewBox="1 .2 20 20" {...lineArt} strokeWidth={1.500}><path d={gear} /><circle cx="11" cy="10.200" r="2.500" /></Glyph>
      </Slot>
    </SidebarFoot>
  </Sidebar>
);

const WindowsTaskbar = () => (
  <Taskbar>
    <Weather>
      <UmbrellaIcon />
      <TwoLines>45°F<Muted>Rain coming</Muted></TwoLines>
    </Weather>
    <Slot $w={54}><WindowsIcon /></Slot>
    <SearchPill>
      <Glyph $w={17} viewBox="0 0 17 17" {...lineArt} strokeWidth={1.800}><circle cx="7" cy="7" r="5.800" /><path d="M11.300 11.300l5 5" /></Glyph>
      Search
    </SearchPill>
    {appIcons.map((a, i) => (
      <AppButton key={i} $state={a.state}>{a.icon}</AppButton>
    ))}
    <Tray>
      <Slot $w={40}><Glyph $w={16} $h={9} viewBox="0 0 16 9" {...lineArt}><path d="M.5 8.500L8 .8l7.500 7.700" /></Glyph></Slot>
      <Slot $w={40}>
        <Glyph $w={20} $h={14} viewBox="0 0 20 14">
          <path d="M4.500 13.300q-3.700-.2-3.700-3.700Q1 6.500 4.300 5.800 5.500.8 10 .8t5.700 4.700q3.500.6 3.500 4t-3.700 3.800z" fill="#8f8f8f" />
          <path d="M2 12l8.500-5.500 7.500 5.200q-1 1.600-2.500 1.600h-11Q3 13.300 2 12z" fill="#f2f2f2" />
          <path d="M4.500 13.300q-3.700-.2-3.700-3.700Q1 6.500 4.300 5.800 5.500.8 10 .8t5.700 4.700q3.500.6 3.500 4t-3.700 3.800z" {...lineArt} strokeWidth={1.200} />
        </Glyph>
      </Slot>
      <Slot $w={40}>
        <Glyph $w={14} $h={19} viewBox="0 0 14 19" {...lineArt} stroke="#1b57a8" strokeWidth={1.600}>
          <rect x="4.200" y=".8" width="5.600" height="11.500" rx="2.800" /><path d="M.9 9q0 6.300 6.100 6.300T13.100 9M7 15.500v3" />
        </Glyph>
      </Slot>
      <TrayStatus>
        <Slot $w={30}>
          <Glyph $w={20} $h={15} viewBox="0 0 20 15" {...lineArt} strokeWidth={1.500}>
            <path d="M.8 5q9.200-8.400 18.400 0M3.800 8.200q6.200-5.500 12.400 0M6.700 11.200q3.300-3 6.600 0" /><circle cx="10" cy="13.300" r="1.200" fill="#1b1b1b" />
          </Glyph>
        </Slot>
        <Slot $w={30}>
          <Glyph $w={20} $h={16} viewBox="0 0 20 16" {...lineArt} strokeWidth={1.300}>
            <path d="M.8 5.500h3L8 1.500v13l-4.200-4h-3zM10.500 5.500q1.800 2.500 0 5M13 3.500q3.200 4.500 0 9" /><path d="M15.500 1.500q5.500 6.500 0 13" stroke="#aaa" />
          </Glyph>
        </Slot>
        <Slot $w={30}>
          <Glyph $w={20} $h={16} viewBox="0 0 20 16">
            <rect x="1.300" y="4" width="15.700" height="11.300" rx="2" fill="none" stroke="#1b1b1b" strokeWidth="1.300" />
            <path d="M6.500 5.500H15.700v8.300H2.700v-3z" fill="#1b1b1b" /><path d="M18 7.500h2v4h-2z" fill="#1b1b1b" />
            <path d="M4.500 0L0 6.500h2.400L1.200 10.500 6.500 4H4L5 0z" fill="#1b1b1b" stroke="#dadada" strokeWidth=".4" />
          </Glyph>
        </Slot>
      </TrayStatus>
      <TwoLines $right>2:55 PM<DateLine>2/21/2023</DateLine></TwoLines>
    </Tray>
  </Taskbar>
);

export default function App() {
  return (
    <>
      <GlobalStyle />
      <Screen>
        <BrowserTabs />
        <BrowserToolbar />
        <Viewport>
          <WeatherPage />
          <EdgeSidebar />
        </Viewport>
        <WindowsTaskbar />
        <CaptureFrame />
      </Screen>
    </>
  );
}
